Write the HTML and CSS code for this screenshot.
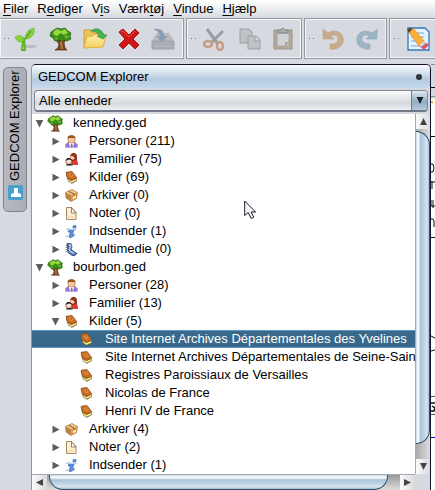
FILE: index.html
```html
<!DOCTYPE html>
<html lang="da">
<head>
<meta charset="utf-8">
<title>GEDCOM Explorer</title>
<link rel="stylesheet" href="styles.css">
</head>
<body>
<svg class="defs" width="0" height="0">
<defs>
<linearGradient id="bar" x2="0" y2="1"><stop stop-color="#fff"/><stop offset="1" stop-color="#a9c3dc"/></linearGradient>
<linearGradient id="fold" x2="0" y2="1"><stop stop-color="#fff3b0"/><stop offset="1" stop-color="#f3cf60"/></linearGradient>
<symbol id="tree" viewBox="0 0 24 24"><path d="M9 13h5l1-2 2 1-2 4 1 5 2 2H6l3-2 1-4-4-5z" fill="#7c4522" stroke="#4a2a18" stroke-width=".7"/><path d="M11 15l1 7h2l-1-8z" fill="#b07845"/><path d="M2 5l3-2 3-2 4 1 4-1 3 3 3 2-1 3 1 3-4 2-3-1-2 1-3-1-4 1-2-3-3-2z" fill="#3d8b18" stroke="#286013" stroke-width=".7"/><path d="M4 5l4-3 4 2 4-2 3 4-4 2-3-2-4 3-3-1z" fill="#94d93e"/><path d="M5 11l3-1 1 2-2 1zm10-2l4-1 1 2-3 2z" fill="#66b82c"/></symbol>
<symbol id="person" viewBox="0 0 13 13"><path d="M.5 12.5V9.5l2-2h8l2 2v3z" fill="#9077cf" stroke="#b5a5dc" stroke-width=".7"/><path d="M4 8h5l-1 4.5H5z" fill="#fff"/><path d="M6 9h1.3l.5 3.5H5.5z" fill="#8060bd"/><rect x="3" y="1" width="7" height="7" rx="3" fill="#f7c8a0" stroke="#ad6b40" stroke-width=".6"/><path d="M2.7 4V1.5L5 .3h3l2.3 1.4V4L9 3H4z" fill="#965727"/></symbol>
<symbol id="family" viewBox="0 0 13 13"><path d="M5 3l2-3h3l2 2v5l1 5H7z" fill="#8d3024"/><path d="M6 12l2-4 4-1 1 5z" fill="#d83b32"/><circle cx="7.8" cy="4.3" r="2.4" fill="#ffd0b2"/><path d="M5 3l3-2 3 3-1 3-1-3-2-1z" fill="#90352a"/><circle cx="3.7" cy="8.4" r="3" fill="#ffe1ce" stroke="#59332b" stroke-width=".7"/><path d="M1 8l1-3h3l1.7 2.3L4 6.5z" fill="#342722"/><path d="M1 12.5l1-1.5h4l2 1.5z" fill="#222"/></symbol>
<symbol id="book" viewBox="0 0 13 13"><path d="M1 2l2 8 4 2.7 5-3-1-2-5 1z" fill="#69706a"/><path d="M2.7 7.5l3.5 2.2 5.3-2.2v2.2L6.6 12 3 9.8z" fill="#fff187" stroke="#806637" stroke-width=".5"/><path d="M1 1.3L7 .4l5 6.7-5.5 2.2L2.2 7z" fill="#c86d20" stroke="#84501f" stroke-width=".7"/><path d="M3.8 3l3-.6 2 2.5-3.2 1z" fill="#eaa255"/><path d="M5 3.6l1.6-.3 1 1.2-1.7.5z" fill="#a95517"/></symbol>
<symbol id="box" viewBox="0 0 13 13"><path d="M.5 3.5L7 .5l5.5 3-1 6L6 12.5 1 9z" fill="#c1843f" stroke="#a36c34" stroke-width=".6"/><path d="M1 3.7L7 .9l5.2 2.6-6 2.7z" fill="#f0c886"/><path d="M6 6.2l6-2.6-1 5.7-5 2.8z" fill="#dba057"/><path d="M3.6 2.5l5.5 2.4v2M3.6 2.5" fill="none" stroke="#94602c"/><path d="M8 8l3-1.3v2L8 10.3z" fill="#fff2db"/></symbol>
<symbol id="note" viewBox="0 0 13 13"><path d="M1.5.5h5l4.5 5v7H1.5z" fill="#fbefd0" stroke="#a58b68"/><path d="M6.5.5V6H11z" fill="#fff" stroke="#7f6547" stroke-width=".8"/><path d="M3 9h6v2H3z" fill="#f5dfad"/></symbol>
<symbol id="info" viewBox="0 0 13 13"><path d="M8 .7l3-.2v2.3l-3 .4zM4 5h5L7.5 10l1.8-.7-.3 1.5-3 1.7H4L5.2 7H3z" fill="#5a91df" stroke="#3469b6" stroke-width=".6"/><path d="M1 4.5l4-1M.5 11.5l3-.7M9 5l2.5-1" stroke="#91b4e4"/></symbol>
<symbol id="media" viewBox="0 0 13 13"><path d="M2 .5h4l1 3-1 3 3 2 3 2-2 2H7l-4-3-.5-4z" fill="#5279bc" stroke="#32445f" stroke-width=".8"/><path d="M3.5 1.5l1.7.2.3 2-1.6 3L6 9l3 1" fill="none" stroke="#b8ceee" stroke-width="1.4"/><path d="M1.3 2v7m2-8v8" stroke="#2b3548" stroke-dasharray="1 1" stroke-width=".8"/></symbol>
<symbol id="open" viewBox="0 0 9 9"><path d="M.7 1h7.6L4.5 8.5z" fill="#5d5d5d"/></symbol>
<symbol id="shut" viewBox="0 0 9 9"><path d="M1.5.7v7.6L8.6 4.5z" fill="#5d5d5d"/></symbol>
</defs>
</svg>
<div class="window">
<nav class="menu"><span><u>F</u>iler</span><span>R<u>e</u>diger</span><span>V<u>i</u>s</span><span>Værk<u>t</u>øj</span><span><u>V</u>indue</span><span><u>H</u>jælp</span></nav>
<div class="toolbar">
<div class="group main">
<i class="grip"></i>
<svg class="tool" viewBox="0 0 24 24"><path d="M10 18h10l3 1-5 2H9z" fill="#b9bcc0"/><path d="M9 12c-1-4-5-4-9-2 2 5 5 6 9 4zm1 0c1-6 2-9 9-11 1 5-1 9-7 11z" fill="#8bd23b" stroke="#65a92b" stroke-width=".6"/><path d="M9 11l1 12h-3l1-9m2-2l6-8" fill="none" stroke="#60b426" stroke-width="2"/></svg>
<svg class="tool"><use href="#tree"/></svg>
<svg class="tool" viewBox="0 0 24 24"><path d="M1 21V3h7l2 3h10v10z" fill="#ecc557" stroke="#c79d38"/><path d="M1 21L4 10l6-1 2-2 11 1-3 12z" fill="url(#fold)" stroke="#dfb344"/><path d="M8 4q8-6 13 4h3l-4 4-6-3h3q-3-5-9-5z" fill="#43b955" stroke="#29883b" stroke-width=".7"/></svg>
<svg class="tool" viewBox="0 0 24 24"><path d="M2 5l4-3 6 6 6-6 4 4-6 6 6 6-4 4-6-6-6 6-4-4 6-6z" fill="#cf1717" stroke="#aa1010"/><path d="M4 5l2-1 6 6 6-6" fill="none" stroke="#ea5149"/></svg>
<svg class="tool" viewBox="0 0 24 24"><path d="M2 12l4-6h12l4 6v9H2z" fill="#b8bbc1"/><path d="M1 14h22v8H1z" fill="#a9adb3" stroke="#9da1a8"/><path d="M3 19h18" stroke="#c5c7ca" stroke-dasharray="1 1"/><path d="M2 2q11-2 11 7h4l-6 6-6-6h4Q8 4 2 2z" fill="#899eb5"/></svg>
</div>
<div class="group edit">
<i class="grip"></i>
<svg class="tool" viewBox="0 0 24 24"><path d="M4 2l11 15M20 4L8 16" stroke="#999da1" stroke-width="3"/><g fill="none" stroke="#c59c84" stroke-width="2.5"><ellipse cx="5" cy="17" rx="4" ry="3"/><ellipse cx="17" cy="19" rx="3" ry="4"/></g></svg>
<svg class="tool" viewBox="0 0 24 24"><g fill="#bfc2c4" stroke="#9a9da0"><path d="M3 2h9l3 3v11H3z"/><path d="M11 9h8l4 4v9H11z"/><path d="M18 9v5h5" fill="#d5d6d7"/></g></svg>
<svg class="tool" viewBox="0 0 24 24"><path d="M3 3h18v19H3z" fill="#b5a993" stroke="#9b9487"/><path d="M6 6h12v13H6z" fill="#d0d2d3" stroke="#a5a6a6"/><path d="M7 6V3h3q1-4 4 0h3v3z" fill="#a9acae" stroke="#85898c"/><path d="M14 20v-5h5z" fill="#a7a8a8"/></svg>
</div>
<div class="group undo">
<i class="grip"></i>
<svg class="tool" viewBox="0 0 24 24"><path d="M2 2v10h11l-3-3c5-3 9 2 6 6-2 2-4 2-7 2v5c17 2 17-18 4-18q-3 0-6 2z" fill="#c8ab8b" stroke="#bda180" stroke-width=".6"/></svg>
<svg class="tool" viewBox="0 0 24 24"><path d="M22 2v10H11l3-3C9 6 5 11 8 15q2 2 7 2v5C-2 24-2 4 11 4q3 0 6 2z" fill="#9db4c4" stroke="#91a9bb" stroke-width=".6"/></svg>
</div>
<div class="group last">
<i class="grip"></i>
<svg class="tool" viewBox="0 0 24 24"><path d="M2 1h17l4 4v18H2z" fill="#e7f3fd" stroke="#3476bd" stroke-width="1.3"/><path d="M5 6h13M5 10h13M5 14h13M5 19h13" stroke="#70a9dd"/><path d="M2 4l5-3 11 13-5 5z" fill="#fbb03a" stroke="#e48b16" stroke-width=".7"/><path d="M1 2l6-1-4 5z" fill="#504232"/><path d="M13 19l5-5 5 4-5 5z" fill="#d9586c"/><path d="M13 18l5-4 2 2-5 4z" fill="#d3dae0"/></svg>
<i class="rule"></i>
</div>
</div>
<div class="work">
<aside class="dock"><div class="tab"><span>GEDCOM Explorer</span><svg width="15" height="15" viewBox="0 0 15 15"><rect width="15" height="15" rx="2" fill="#4a9fcf"/><path d="M3 12V9l3-1V3h4v5l3 1v3z" fill="#fff"/></svg></div></aside>
<section class="panel">
<header class="title"><span>GEDCOM Explorer</span><i></i></header>
<div class="combowrap"><div class="combo"><span>Alle enheder</span><b><svg width="8" height="7" viewBox="0 0 8 7"><path d="M.5 0h7L4 7z" fill="#182028"/></svg></b></div></div>
<div class="view">
<div class="list">
<div class="row root"><svg class="arr"><use href="#open"/></svg><svg class="big"><use href="#tree"/></svg><span>kennedy.ged</span></div>
<div class="row"><svg class="arr"><use href="#shut"/></svg><svg class="ic"><use href="#person"/></svg><span>Personer (211)</span></div>
<div class="row"><svg class="arr"><use href="#shut"/></svg><svg class="ic"><use href="#family"/></svg><span>Familier (75)</span></div>
<div class="row"><svg class="arr"><use href="#shut"/></svg><svg class="ic"><use href="#book"/></svg><span>Kilder (69)</span></div>
<div class="row"><svg class="arr"><use href="#shut"/></svg><svg class="ic"><use href="#box"/></svg><span>Arkiver (0)</span></div>
<div class="row"><svg class="arr"><use href="#shut"/></svg><svg class="ic"><use href="#note"/></svg><span>Noter (0)</span></div>
<div class="row"><svg class="arr"><use href="#shut"/></svg><svg class="ic"><use href="#info"/></svg><span>Indsender (1)</span></div>
<div class="row"><svg class="arr"><use href="#shut"/></svg><svg class="ic"><use href="#media"/></svg><span>Multimedie (0)</span></div>
<div class="row root"><svg class="arr"><use href="#open"/></svg><svg class="big"><use href="#tree"/></svg><span>bourbon.ged</span></div>
<div class="row"><svg class="arr"><use href="#shut"/></svg><svg class="ic"><use href="#person"/></svg><span>Personer (28)</span></div>
<div class="row"><svg class="arr"><use href="#shut"/></svg><svg class="ic"><use href="#family"/></svg><span>Familier (13)</span></div>
<div class="row"><svg class="arr"><use href="#open"/></svg><svg class="ic"><use href="#book"/></svg><span>Kilder (5)</span></div>
<div class="row leaf selected"><svg class="ic"><use href="#book"/></svg><span>Site Internet Archives Départementales des Yvelines</span></div>
<div class="row leaf"><svg class="ic"><use href="#book"/></svg><span>Site Internet Archives Départementales de Seine-Saint-D</span></div>
<div class="row leaf"><svg class="ic"><use href="#book"/></svg><span>Registres Paroissiaux de Versailles</span></div>
<div class="row leaf"><svg class="ic"><use href="#book"/></svg><span>Nicolas de France</span></div>
<div class="row leaf"><svg class="ic"><use href="#book"/></svg><span>Henri IV de France</span></div>
<div class="row"><svg class="arr"><use href="#shut"/></svg><svg class="ic"><use href="#box"/></svg><span>Arkiver (4)</span></div>
<div class="row"><svg class="arr"><use href="#shut"/></svg><svg class="ic"><use href="#note"/></svg><span>Noter (2)</span></div>
<div class="row"><svg class="arr"><use href="#shut"/></svg><svg class="ic"><use href="#info"/></svg><span>Indsender (1)</span></div>
</div>
<div class="vbar"><i class="btn"><svg width="7" height="7"><path d="M0 7h7L3.5 0z" fill="#444"/></svg></i><div class="vtrack"><i></i></div><i class="btn"><svg width="7" height="7"><path d="M0 0h7L3.5 7z" fill="#444"/></svg></i></div>
<div class="hbar"><i class="btn"><svg width="7" height="7"><path d="M7 0v7L0 3.5z" fill="#444"/></svg></i><div class="htrack"><i></i></div><i class="btn"><svg width="7" height="7"><path d="M0 0v7l7-3.5z" fill="#444"/></svg></i></div>
<div class="corner"></div>
</div>
</section>
<svg class="editor" width="4" height="426" viewBox="0 0 4 426"><path fill="#fff" d="M0 35h4v391H0z"/><path fill="#d6d9df" d="M0 0h4v35H0z"/><path d="M0 .5h4M0 32.5h4" stroke="#888b94"/><path d="M0 23.5h4" stroke="#080820"/><path d="M0 37h2v2H0z" fill="#e8ae22"/><path d="M0 72.500h4M0 173.500h4" stroke="#111"/><path d="M0 100h2q2 4 0 8H0M1 117v8M0 118h4M0 136v6h4M2 136v8M0 155h2l1 2v6M0 272l4 2m0 12l-4 1" fill="none" stroke="#111"/><path d="M0 332.500h4M0 350.500h4" stroke="#555"/><path d="M0 339h4M0 347h3l1-3-3-2" fill="none" stroke="#111" stroke-width="1.5"/><path d="M0 373.500h4" stroke="#0808c0"/></svg>
</div>
<svg class="cursor" width="13" height="20" viewBox="0 0 13 20"><path d="M.7 1v14.500l3.500-3 3 6 2.600-1.300-2.700-5.200h4.500z" fill="#f4f5f8" stroke="#1a1b29"/></svg>
</div>
</body>
</html>
```
FILE: styles.css
```css
* { box-sizing: border-box; }
body { margin: 0; overflow: hidden; font: 13px/18px "Liberation Sans", Arial, sans-serif; color: #000; }
svg { display: block; flex: none; }
.defs { position: absolute; }
.window { position: relative; width: 435px; height: 490px; display: flex; flex-direction: column; background: #d6d9df; overflow: hidden; }
.menu { height: 18px; display: flex; gap: 9px; padding-left: 3px; background: linear-gradient(#fff, #f3f4f6 35%, #d6d9df); line-height: 17px; white-space: nowrap; }
.menu u { text-underline-offset: 2px; }
.toolbar { height: 41px; display: flex; gap: 2px; }
.group { display: flex; align-items: center; gap: 10px; height: 41px; border: 1px solid #95979d; box-shadow: inset 1px 1px #f4f5f7, inset -1px -1px #f4f5f7; flex: none; }
.main { width: 184px; border-left: 0; padding-left: 4px; }
.edit { width: 116px; padding-left: 4px; }
.undo { width: 83px; padding-left: 4px; }
.last { width: 48px; padding-left: 4px; border-right: 0; }
.tool { width: 24px; height: 24px; }
.grip { width: 7px; height: 1px; margin-right: -5px; background: linear-gradient(90deg, #777 1px, transparent 1px 4px, #777 4px 5px, transparent 5px); flex: none; }
.main .grip { margin-right: -6px; }
.rule { width: 1px; height: 34px; background: #999da6; margin-left: -3px; }
.work { height: 426px; margin-top: 5px; display: flex; }
.dock { width: 31px; padding: 3px 0 0 3px; }
.tab { width: 24px; height: 145px; border: 1px solid #7f838b; border-radius: 5px; background: linear-gradient(90deg, #b8bac0, #a9acb3); display: flex; flex-direction: column; align-items: center; gap: 4px; padding-top: 10px; }
.tab span { writing-mode: vertical-rl; transform: rotate(180deg); line-height: 20px; height: 103px; white-space: nowrap; }
.panel { width: 400px; border: 1px solid #111329; border-bottom: 0; border-left-color: #8e97ab; border-radius: 5px 5px 0 0; background: #d6d9df; overflow: hidden; }
.title { height: 23px; padding: 0 8px 0 6px; display: flex; align-items: center; justify-content: space-between; background: linear-gradient(#fbfcfe, #c3d4e5 50%, #b4cbe1 65%, #c5dae9); }
.title i { width: 6px; height: 6px; border-radius: 50%; background: #303338; }
.combowrap { height: 26px; padding: 2px 2px 0; }
.combo { height: 22px; border: 1px solid #7e8796; border-bottom: 2px solid #72798b; border-radius: 4px; display: flex; align-items: center; justify-content: space-between; padding-left: 4px; background: linear-gradient(#fafafc, #d6d9df 65%, #eceef1); overflow: hidden; }
.combo b { width: 16px; height: 20px; border-left: 1px solid #607f9a; display: flex; align-items: center; justify-content: center; background: linear-gradient(#dfe9f1, #91adc3 55%, #b9cddd); }
.view { display: grid; grid-template: 360px 16px / 383px 15px; }
.list { background: #fff; overflow: hidden; }
.row { height: 18px; display: flex; align-items: center; padding-left: 19px; white-space: nowrap; }
.root { padding-left: 3px; }
.leaf { padding-left: 48px; }
.selected { background: #39698a; color: #fff; box-shadow: inset 0 1px #5f95c4, inset 0 -1px #5f95c4; }
.arr { width: 9px; height: 9px; margin-right: 5px; }
.root .arr { margin-right: 3px; }
.ic { width: 13px; height: 13px; margin-right: 11px; }
.leaf .ic { margin-right: 12px; }
.big { width: 17px; height: 17px; margin-right: 9px; }
.btn { width: 15px; height: 15px; flex: none; display: flex; align-items: center; justify-content: center; background: linear-gradient(90deg, #fafafa, #d7dade); }
.vbar { display: flex; flex-direction: column; border-left: 1px solid #a4a8b0; }
.vtrack { height: 330px; padding-top: 2px; background: linear-gradient(90deg, #aaa, #ddd); }
.vtrack i { display: block; height: 313px; border: 1px solid #314f69; border-left: 0; border-radius: 0 14px 14px 0; background: linear-gradient(90deg, #cbdbe9 0, #f8fcff 18%, #a9c4da 35%, #d5e5f0 85%, #9ebdd2); }
.hbar { display: flex; border-top: 1px solid #a4a8b0; }
.htrack { width: 353px; background: linear-gradient(#999, #ddd); padding-left: 2px; }
.htrack i { display: block; width: 339px; height: 15px; border: 1px solid #314f69; border-top: 0; border-radius: 0 0 14px 14px; background: linear-gradient(#cbdbe9, #f8fcff 18%, #a9c4da 35%, #d5e5f0 85%, #9ebdd2); }
.corner { background: #d6d9df; }
.editor { width: 4px; }
.cursor { position: absolute; left: 244px; top: 200px; }
```
